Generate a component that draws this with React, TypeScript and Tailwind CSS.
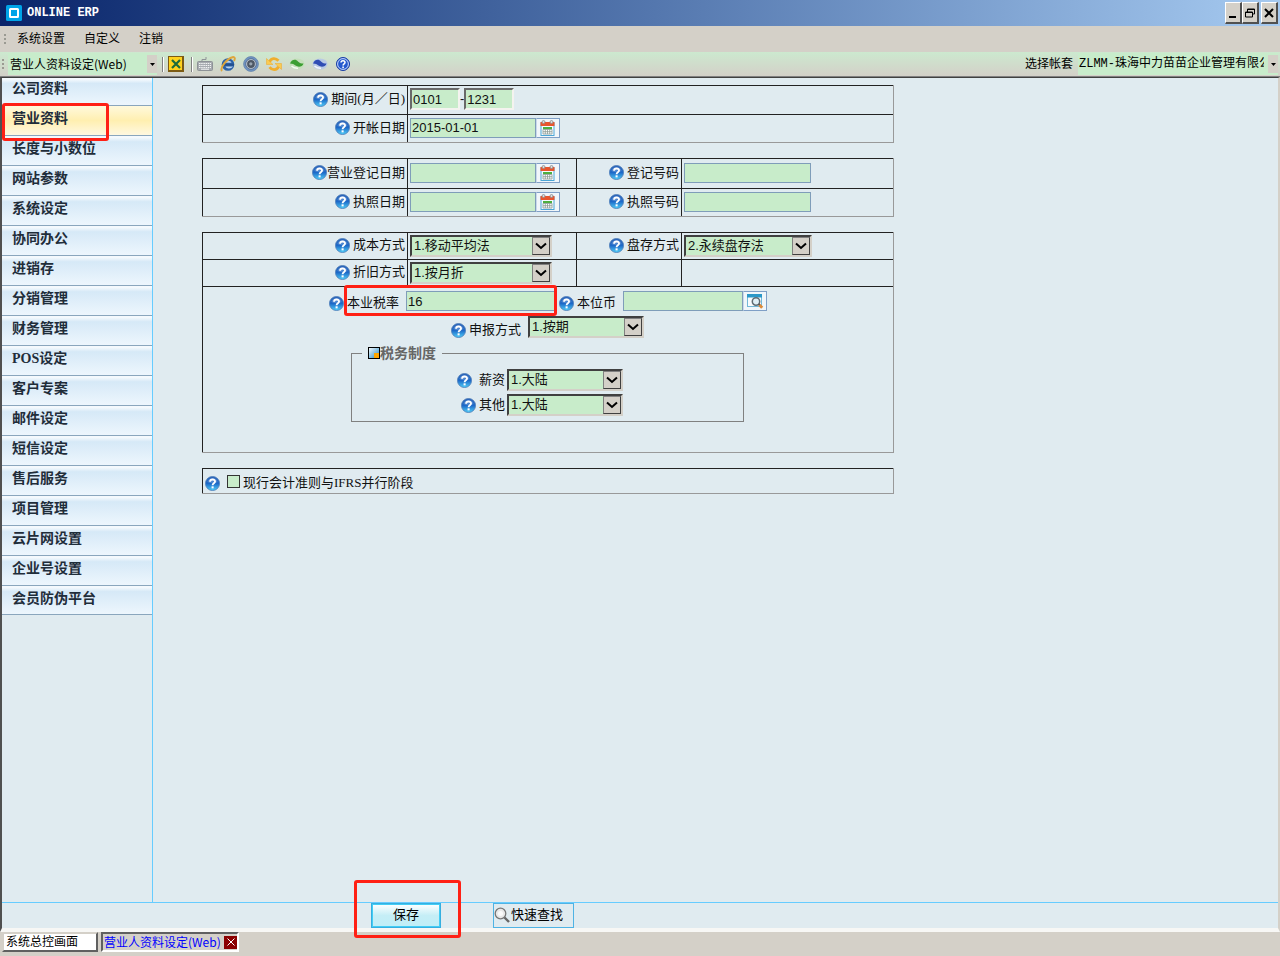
import { useState } from "react";
import type { ReactNode } from "react";
import clsx from "clsx";

const MENUS = ["系统设置", "自定义", "注销"];

const NAV_ITEMS = [
  "公司资料",
  "营业资料",
  "长度与小数位",
  "网站参数",
  "系统设定",
  "协同办公",
  "进销存",
  "分销管理",
  "财务管理",
  "POS设定",
  "客户专案",
  "邮件设定",
  "短信设定",
  "售后服务",
  "项目管理",
  "云片网设置",
  "企业号设置",
  "会员防伪平台",
];

const MARK = "pointer-events-none absolute z-10 rounded-[3px] border-[3px] border-[#ff2015]";
const FIELD = "h-5 border border-[#7f9db9] bg-[#c8ecca] px-px text-[13px] leading-4 outline-none";
const SUNKEN =
  "h-[22px] w-[50px] border-2 border-t-[#696969] border-l-[#696969] border-r-[#f4f3ef] border-b-[#f4f3ef] bg-[#c8ecca] px-px text-[13px] leading-4 outline-none";
const CELL = "flex items-center border-t border-l border-[#222]";
const SECTION = "w-[692px] border-r border-b border-[#999]";
const GRID = "grid grid-cols-[205px_169px_105px_1fr]";

function HelpIcon() {
  return (
    <svg className="size-[15px] shrink-0" viewBox="0 0 16 16">
      <defs>
        <linearGradient id="help" x1="0" y1="0" x2="0" y2="1">
          <stop offset="0" stopColor="#2a62b8" />
          <stop offset="0.5" stopColor="#1d69c8" />
          <stop offset="1" stopColor="#4fd0fa" />
        </linearGradient>
      </defs>
      <circle cx="8" cy="8" r="7.5" fill="url(#help)" stroke="#4d7db8" strokeWidth="0.9" />
      <path d="M2.5 6.500C3.500 0.500 12.500 0.500 13.500 6.500 10 8.200 6 8.200 2.500 6.500z" fill="#fff" opacity="0.2" />
      <path
        d="M5.400 6.200c.1-3.400 5.400-3.200 5.300-.3C10.700 7.800 8.200 7.800 8.100 9.800"
        fill="none"
        stroke="#fff"
        strokeWidth="2"
      />
      <rect x="7" y="11" width="2.200" height="2.200" fill="#fff" />
    </svg>
  );
}

function CalendarIcon() {
  return (
    <svg className="h-4 w-[15px]" viewBox="0 0 15 16">
      <rect x="1" y="3" width="13" height="12.500" fill="#f5fbff" stroke="#4aa5d5" />
      <rect x="0.500" y="2" width="14" height="4" fill="#e8552d" />
      <circle cx="3.500" cy="2" r="1.500" fill="#ddd" stroke="#888" strokeWidth="0.8" />
      <circle cx="11.500" cy="2" r="1.500" fill="#ddd" stroke="#888" strokeWidth="0.8" />
      <rect x="3" y="7" width="9" height="2" fill="#4caf3f" />
      <path
        d="M3 9.500h9v4.500H3zM3 11.700h9M5.300 9.500v4.500M7.500 9.500v4.500M9.700 9.500v4.500"
        fill="#fff"
        stroke="#8a9a94"
        strokeWidth="0.8"
      />
    </svg>
  );
}

function LookupIcon() {
  return (
    <svg className="h-4 w-[17px]" viewBox="0 0 17 16">
      <rect x="0.500" y="1.500" width="14" height="12" fill="#f7fbfd" stroke="#72b8d8" />
      <rect x="0" y="1" width="15" height="3.500" fill="#2b98c8" />
      <circle cx="9" cy="8.500" r="3.700" fill="#dfeff6" stroke="#5f6b73" strokeWidth="1.500" />
      <path d="M11.500 11l1.500 1.500" stroke="#555" strokeWidth="2" />
      <path d="M12.500 12l2.700 2.700" stroke="#dc8b3a" strokeWidth="3" />
    </svg>
  );
}

function SearchIcon() {
  return (
    <svg className="size-4 shrink-0" viewBox="0 0 16 16">
      <circle cx="6.500" cy="6.500" r="5.300" fill="#e9e9e9" stroke="#777" strokeWidth="1.300" />
      <circle cx="6.500" cy="6.500" r="2.500" fill="#fafafa" />
      <path d="M10.500 10.500l4.500 4.500" stroke="#666" strokeWidth="2.400" />
    </svg>
  );
}

function ToolbarIcons() {
  const button = "flex h-5 w-[23px] items-center justify-center";
  return (
    <>
      <button type="button" aria-label="键盘" className={button}>
        <svg className="size-4" viewBox="0 0 16 16">
          <path d="M5 5V3.500h4V1" fill="none" stroke="#8e9297" />
          <rect x="0.500" y="5.500" width="15" height="9" rx="1" fill="#a7abb0" stroke="#8e9297" />
          <path
            d="M2 7.500h12M2 9.500h12M2 11.500h12"
            stroke="#f2f3f4"
            strokeWidth="1.200"
            strokeDasharray="1.500 0.700"
          />
          <path d="M4 13.200h8" stroke="#f2f3f4" />
        </svg>
      </button>
      <button type="button" aria-label="浏览器" className={button}>
        <svg className="size-4" viewBox="0 0 16 16">
          <circle cx="8" cy="8.500" r="6.300" fill="#2c62a8" />
          <path d="M11.500 6.800H5.500c.5-2.800 5.500-2.800 6 0zM5.500 10.500h7.500c-1.500 2.500-6.500 2.800-7.500 0z" fill="#b9d3ee" />
          <path d="M4 8.700h10" stroke="#24508c" strokeWidth="2" />
          <path
            d="M2 15C-.5 12 7 2.500 12.500 1.200c3-.6 2.500 2 1.500 3.800"
            fill="none"
            stroke="#dda63d"
            strokeWidth="2"
          />
        </svg>
      </button>
      <button type="button" aria-label="音效" className={button}>
        <svg className="size-4" viewBox="0 0 16 16">
          <circle cx="8" cy="8" r="7.400" fill="#6f94c4" stroke="#6684aa" strokeWidth="0.800" />
          <circle cx="8" cy="8" r="5.300" fill="#c3ccd6" stroke="#4b6387" strokeWidth="0.800" />
          <circle cx="8" cy="8" r="3.900" fill="#4e5865" />
          <circle cx="7.800" cy="7.800" r="1.600" fill="#98a4b1" />
        </svg>
      </button>
      <button type="button" aria-label="刷新" className={button}>
        <svg className="size-4" viewBox="0 0 16 16">
          <path d="M3.500 6C5 2 9.500 1.500 12.500 4.800" fill="none" stroke="#efae2e" strokeWidth="2.800" />
          <path d="M0.500 2.500v6h6.500z" fill="#fbcb50" stroke="#e9a62d" strokeWidth="0.500" />
          <path d="M12.500 10.500c-1.500 4-6.500 4-9 .7" fill="none" stroke="#efae2e" strokeWidth="2.800" />
          <path d="M15.500 13.500v-6H9z" fill="#fbcb50" stroke="#e9a62d" strokeWidth="0.500" />
        </svg>
      </button>
      <button type="button" aria-label="后退" className={button}>
        <svg className="size-4" viewBox="0 0 16 16">
          <ellipse cx="8" cy="8" rx="7.500" ry="5.500" fill="#c4dfba" />
          <path d="M1 7.500C3 3 7 3 9 5.500c1.500 1.800 3.500 2 5.500 2-1 3.500-5.500 4-8 2C5 8.200 3.500 7.500 1 7.500z" fill="#3c9f32" />
          <path d="M2.500 10c2 2 4 2.500 6.500 2.300" fill="none" stroke="#f4faf1" strokeWidth="1.500" />
        </svg>
      </button>
      <button type="button" aria-label="前进" className={button}>
        <svg className="size-4" viewBox="0 0 16 16">
          <ellipse cx="8" cy="8" rx="7.500" ry="5.500" fill="#b8c9e4" />
          <path d="M1 7.500C3 3 7 3 9 5.500c1.500 1.800 3.500 2 5.500 2-1 3.500-5.500 4-8 2C5 8.200 3.500 7.500 1 7.500z" fill="#2f4db4" />
          <path d="M2.500 10c2 2 4 2.500 6.500 2.300" fill="none" stroke="#f1f4fa" strokeWidth="1.500" />
        </svg>
      </button>
      <button type="button" aria-label="帮助" className={button}>
        <svg className="size-4" viewBox="0 0 16 16">
          <circle cx="8" cy="8" r="6.500" fill="#2459ce" stroke="#1a3da5" />
          <circle cx="8" cy="8" r="5.400" fill="none" stroke="#dce8ff" strokeWidth="0.900" />
          <path d="M6 6.500c.1-2.500 4-2.300 4 0C10 8 8.100 7.800 8.100 9.500" fill="none" stroke="#fff" strokeWidth="1.500" />
          <rect x="7.300" y="10.500" width="1.600" height="1.600" fill="#fff" />
        </svg>
      </button>
    </>
  );
}

function Label({ htmlFor, children, tight }: { htmlFor: string; children: ReactNode; tight?: boolean }) {
  return (
    <label
      htmlFor={htmlFor}
      className={clsx("flex items-center whitespace-nowrap leading-4", tight ? "gap-0" : "gap-[3px]")}
    >
      <HelpIcon />
      <span>{children}</span>
    </label>
  );
}

function LabelCell({ htmlFor, children, tight }: { htmlFor: string; children: ReactNode; tight?: boolean }) {
  return (
    <div className={clsx(CELL, "justify-end pr-0.5 pb-0.5")}>
      <Label htmlFor={htmlFor} tight={tight}>
        {children}
      </Label>
    </div>
  );
}

function Select({ id, option, className }: { id: string; option: string; className: string }) {
  return (
    <span className={clsx("relative block h-[22px] shrink-0", className)}>
      <select
        id={id}
        className="size-full appearance-none border-2 border-t-[#404040] border-l-[#404040] border-r-[#d4d0c8] border-b-[#d4d0c8] bg-[#c8ecca] pr-5 pl-0.5 text-[13px] leading-4 outline-none"
      >
        <option>{option}</option>
      </select>
      <span className="pointer-events-none absolute top-0.5 right-0.5 flex size-[18px] items-center justify-center border border-t-[#808080] border-l-[#808080] border-r-[#404040] border-b-[#404040] bg-[#d4d0c8]">
        <svg className="h-2 w-3" viewBox="0 0 12 8">
          <path d="M1 1.500l5 4.500 5-4.500" fill="none" stroke="#000" strokeWidth="2" />
        </svg>
      </span>
    </span>
  );
}

function DateField({ id, value }: { id: string; value?: string }) {
  return (
    <div className="flex">
      <input id={id} defaultValue={value} className={clsx(FIELD, "w-[126px]")} />
      <button
        type="button"
        aria-label="选择日期"
        className="flex h-5 w-6 items-center justify-start border border-[#7f9fc6] border-l-[#c9d8ea] bg-[#f0f6fa] pl-[3px]"
      >
        <CalendarIcon />
      </button>
    </div>
  );
}

function ComboArrow() {
  return (
    <span className="pointer-events-none absolute top-0.5 right-0 flex h-[18px] w-[10px] items-center justify-center bg-[#d4d0c8]">
      <svg className="h-[3px] w-[5px]" viewBox="0 0 5 3">
        <path d="M0 0h5L2.500 3z" />
      </svg>
    </span>
  );
}

function TitleBar() {
  const button =
    "flex h-[22px] w-[17px] items-center justify-center border-t border-l border-r-2 border-b-2 border-t-white border-l-white border-r-[#505050] border-b-[#505050] bg-[#d4d0c8]";
  return (
    <header className="flex h-[26px] shrink-0 items-center bg-linear-to-r from-[#0a246a] to-[#a6caf0] pr-0.5 pl-1.5 text-white">
      <svg className="size-4" viewBox="0 0 16 16">
        <rect width="16" height="16" rx="1.500" fill="#00a4e8" />
        <rect x="4" y="4" width="8" height="8" rx="0.500" fill="none" stroke="#fff" strokeWidth="2" />
      </svg>
      <h1 className="ml-[5px] flex-1 font-['Liberation_Mono',monospace] text-xs font-bold">ONLINE ERP</h1>
      <button type="button" aria-label="最小化" className={button}>
        <svg className="size-3" viewBox="0 0 12 12">
          <path d="M2 10h7" stroke="#000" strokeWidth="2" />
        </svg>
      </button>
      <button type="button" aria-label="还原" className={button}>
        <svg className="size-3" viewBox="0 0 12 12">
          <path d="M3.500 5V2h7v5H9M3 2.500h8M1.500 5h7v5h-7zM1 5.500h8" fill="none" stroke="#000" />
        </svg>
      </button>
      <button type="button" aria-label="关闭" className={clsx(button, "ml-0.5")}>
        <svg className="size-3" viewBox="0 0 12 12">
          <path d="M2 2l8 8M10 2l-8 8" stroke="#000" strokeWidth="2" />
        </svg>
      </button>
    </header>
  );
}

function Grip() {
  return (
    <span className="flex w-[3px] shrink-0 flex-col gap-0.5">
      <i className="size-0.5 bg-[#9a9a92]" />
      <i className="size-0.5 bg-[#9a9a92]" />
      <i className="size-0.5 bg-[#9a9a92]" />
    </span>
  );
}

function Toolbar() {
  return (
    <div className="flex h-[25px] shrink-0 items-center border-b border-[#808080] bg-linear-to-b from-[#cce9cf] to-[#d3d0c8] pr-0.5 pl-0.5 text-xs">
      <Grip />
      <div className="relative ml-[3px] h-[22px] w-[149px] bg-[#c8eccb]">
        <select
          aria-label="作业"
          className="size-full appearance-none pr-3 pl-0.5 font-['Noto_Sans_CJK_SC',sans-serif] outline-none"
        >
          <option>营业人资料设定(Web)</option>
        </select>
        <ComboArrow />
      </div>
      <span className="mr-1 ml-[5px] h-[15px] w-0.5 border-l border-[#808080] bg-white" />
      <button
        type="button"
        aria-label="关闭作业"
        className="flex size-4 items-center justify-center border border-r-2 border-b-2 border-[#7c5b13] bg-[#ffd21c]"
      >
        <svg className="size-2.5" viewBox="0 0 10 10">
          <path d="M1 1l8 8M9 1L1 9" stroke="#1c6b3a" strokeWidth="2.200" />
        </svg>
      </button>
      <span className="ml-[7px] h-[15px] w-0.5 border-l border-[#808080] bg-white" />
      <ToolbarIcons />
      <div className="ml-auto flex items-center">
        <label htmlFor="account">选择帐套</label>
        <div className="relative ml-[5px] h-[22px] w-[200px] bg-[#c8eccb]">
          <select
            id="account"
            className="size-full appearance-none pr-[14px] pl-px font-['Liberation_Mono','Noto_Sans_CJK_SC',monospace] outline-none"
          >
            <option>ZLMM-珠海中力苗苗企业管理有限公司</option>
          </select>
          <ComboArrow />
        </div>
      </div>
    </div>
  );
}

function Sidebar() {
  const [active, setActive] = useState("营业资料");
  return (
    <nav className="w-[151px] shrink-0 border-r border-[#66ccff]">
      <ul>
        {NAV_ITEMS.map((item, i) => (
          <li key={item} className={clsx("relative", i === 0 ? "h-7" : "h-[30px] last:h-[29px]")}>
            <button
              type="button"
              onClick={() => setActive(item)}
              className={clsx(
                "flex size-full items-start border-b border-[#8aa6bd] pl-2.5 font-['Liberation_Serif','Noto_Sans_CJK_SC',serif] text-sm leading-5 font-bold text-[#1f2d3a]",
                i === 0 ? "pt-px" : "pt-[3px]",
                item === active
                  ? "bg-linear-to-b from-[#fff9dc] via-[#ffefb0] to-[#fff8e0]"
                  : "bg-linear-to-b from-[#f4f9fd] from-5% via-[#d6e9f7] via-20% to-[#edf6fd]"
              )}
            >
              {item}
            </button>
            {item === active && <span className={clsx(MARK, "-top-[3px] left-0 h-[38px] w-[107px]")} />}
          </li>
        ))}
      </ul>
    </nav>
  );
}

function BusinessForm() {
  return (
    <form id="business" className="flex flex-col gap-[15px] pt-[7px] pl-[49px] text-[13px] text-[#111]">
      <div className={clsx(SECTION, GRID, "grid-rows-[29px_28px]")}>
        <LabelCell htmlFor="period-start">
          期间<span className="font-['Liberation_Serif',serif]">(</span>月／日
          <span className="font-['Liberation_Serif',serif]">)</span>
        </LabelCell>
        <div className={clsx(CELL, "col-span-3 pb-0.5 pl-0.5")}>
          <input id="period-start" defaultValue="0101" className={SUNKEN} />
          <span>-</span>
          <input aria-label="期间结束" defaultValue="1231" className={SUNKEN} />
        </div>
        <LabelCell htmlFor="open-date">开帐日期</LabelCell>
        <div className={clsx(CELL, "col-span-3 pb-0.5 pl-0.5")}>
          <DateField id="open-date" value="2015-01-01" />
        </div>
      </div>

      <div className={clsx(SECTION, GRID, "grid-rows-[30px_28px]")}>
        <LabelCell htmlFor="reg-date" tight>
          营业登记日期
        </LabelCell>
        <div className={clsx(CELL, "pb-0.5 pl-0.5")}>
          <DateField id="reg-date" />
        </div>
        <LabelCell htmlFor="reg-no">登记号码</LabelCell>
        <div className={clsx(CELL, "pb-0.5 pl-0.5")}>
          <input id="reg-no" className={clsx(FIELD, "w-[127px]")} />
        </div>
        <LabelCell htmlFor="license-date">执照日期</LabelCell>
        <div className={clsx(CELL, "pb-0.5 pl-0.5")}>
          <DateField id="license-date" />
        </div>
        <LabelCell htmlFor="license-no">执照号码</LabelCell>
        <div className={clsx(CELL, "pb-0.5 pl-0.5")}>
          <input id="license-no" className={clsx(FIELD, "w-[127px]")} />
        </div>
      </div>

      <div className={SECTION}>
        <div className={clsx(GRID, "grid-rows-[27px_27px]")}>
          <LabelCell htmlFor="cost">成本方式</LabelCell>
          <div className={clsx(CELL, "pl-0.5")}>
            <Select id="cost" option="1.移动平均法" className="w-[142px]" />
          </div>
          <LabelCell htmlFor="stock">盘存方式</LabelCell>
          <div className={clsx(CELL, "pl-0.5")}>
            <Select id="stock" option="2.永续盘存法" className="w-32" />
          </div>
          <LabelCell htmlFor="depreciation">折旧方式</LabelCell>
          <div className={clsx(CELL, "pl-0.5")}>
            <Select id="depreciation" option="1.按月折" className="w-[142px]" />
          </div>
          <div className={CELL} />
          <div className={CELL} />
        </div>
        <div className="border-t border-l border-[#222] pt-1 pb-[30px]">
          <div className="flex items-end pl-[126px]">
            <Label htmlFor="tax-rate">本业税率</Label>
            <div className="relative ml-[7px]">
              <input id="tax-rate" defaultValue="16" className={clsx(FIELD, "block w-[149px]")} />
              <span className={clsx(MARK, "-top-1.5 -left-[62px] h-[31px] w-[213px]")} />
            </div>
            <div className="ml-1">
              <Label htmlFor="currency">本位币</Label>
            </div>
            <input id="currency" className={clsx(FIELD, "ml-[7px] w-[120px]")} />
            <button
              type="button"
              aria-label="查找本位币"
              className="flex h-5 w-6 items-center justify-center border border-[#7f9fc6] border-l-[#c9d8ea] bg-[#f0f6fa]"
            >
              <LookupIcon />
            </button>
          </div>
          <div className="mt-[5px] flex items-end pl-[248px]">
            <Label htmlFor="filing">申报方式</Label>
            <Select id="filing" option="1.按期" className="ml-[7px] w-[116px]" />
          </div>
          <fieldset className="mt-[5px] ml-[148px] h-[79px] w-[393px] border border-[#808080] pl-[105px]">
            <legend className="-ml-[95px] flex items-center px-1.5 text-sm leading-5 font-bold text-[#666]">
              <svg className="size-3" viewBox="0 0 12 12">
                <defs>
                  <linearGradient id="legend" x1="0" y1="0" x2="1" y2="1">
                    <stop offset="0" stopColor="#fff" />
                    <stop offset="1" stopColor="#1583c4" />
                  </linearGradient>
                </defs>
                <rect x="0.500" y="0.500" width="11" height="11" fill="url(#legend)" stroke="#000" />
                <rect x="6" y="6" width="5" height="5" fill="#ffa500" />
              </svg>
              税务制度
            </legend>
            <div className="mt-[6px] flex items-center">
              <label htmlFor="salary" className="flex w-12 items-center justify-between leading-4">
                <HelpIcon />
                薪资
              </label>
              <Select id="salary" option="1.大陆" className="ml-0.5 w-[116px]" />
            </div>
            <div className="mt-[3px] flex items-center pl-1">
              <label htmlFor="other" className="flex w-11 items-center justify-between leading-4">
                <HelpIcon />
                其他
              </label>
              <Select id="other" option="1.大陆" className="ml-0.5 w-[116px]" />
            </div>
          </fieldset>
        </div>
      </div>

      <div className={SECTION}>
        <div className={clsx(CELL, "h-[25px] pt-1 pl-0.5")}>
          <HelpIcon />
          <input
            id="ifrs"
            type="checkbox"
            className="mb-1 ml-[7px] size-[13px] appearance-none border border-[#333] bg-[#c8ecca] checked:bg-[#4a8f50]"
          />
          <label htmlFor="ifrs" className="ml-[3px] leading-4">
            现行会计准则与<span className="font-['Liberation_Serif',serif]">IFRS</span>并行阶段
          </label>
        </div>
      </div>
    </form>
  );
}

function ActionBar() {
  return (
    <div className="flex h-[26px] shrink-0 border-t border-[#66ccff] pl-[369px] text-[13px] leading-5">
      <div className="relative">
        <button
          type="submit"
          form="business"
          className="h-[25px] w-[70px] border border-[#35afe0] bg-linear-to-b from-white via-[#c5eef6] to-[#c0eef7] pb-0.5 inset-ring inset-ring-[#43cdf5]"
        >
          保存
        </button>
        <span className={clsx(MARK, "-top-[23px] -left-[17px] h-[58px] w-[107px]")} />
      </div>
      <button
        type="button"
        className="ml-[52px] flex h-[25px] w-[81px] items-center gap-px border border-[#4fb3e4] pb-0.5"
      >
        <SearchIcon />
        快速查找
      </button>
    </div>
  );
}

function TaskTabs() {
  return (
    <footer className="flex h-6 shrink-0 items-start gap-[3px] pl-0.5 text-xs leading-4">
      <button
        type="button"
        className="h-5 w-24 border-2 border-t-[#d4d0c8] border-l-[#d4d0c8] border-r-[#606060] border-b-[#606060] bg-white pl-0.5 text-left"
      >
        系统总控画面
      </button>
      <div className="flex h-5 w-[138px] items-center justify-between border-2 border-t-[#606060] border-l-[#606060] border-r-white border-b-white bg-[#d4d0c8] pl-px">
        <button
          type="button"
          className="font-['Noto_Sans_CJK_SC',sans-serif] whitespace-nowrap text-[#0000ff]"
        >
          营业人资料设定(Web)
        </button>
        <button type="button" aria-label="关闭页签" className="flex size-[13px] items-center justify-center bg-[#8b0000]">
          <svg className="size-2" viewBox="0 0 8 8">
            <path d="M0.500 0.500l7 7M7.500 0.500l-7 7" stroke="#fff" />
          </svg>
        </button>
      </div>
    </footer>
  );
}

export default function App() {
  return (
    <div className="flex min-h-screen flex-col bg-[#d4d0c8] font-['Liberation_Sans','Noto_Sans_CJK_SC',sans-serif] text-black">
      <TitleBar />
      <div className="flex h-[26px] shrink-0 items-center gap-[10px] pl-1 text-xs">
        <Grip />
        <div className="flex gap-[19px]">
          {MENUS.map((menu) => (
            <button key={menu} type="button">
              {menu}
            </button>
          ))}
        </div>
      </div>
      <Toolbar />
      <main className="flex flex-1 flex-col border-t border-r-2 border-b-4 border-l-2 border-t-[#404040] border-r-[#d4d0c8] border-b-[#f7f7f5] border-l-[#505050] bg-[#e0ebf0]">
        <div className="flex flex-1">
          <Sidebar />
          <div className="flex-1">
            <BusinessForm />
          </div>
        </div>
        <ActionBar />
      </main>
      <TaskTabs />
    </div>
  );
}
